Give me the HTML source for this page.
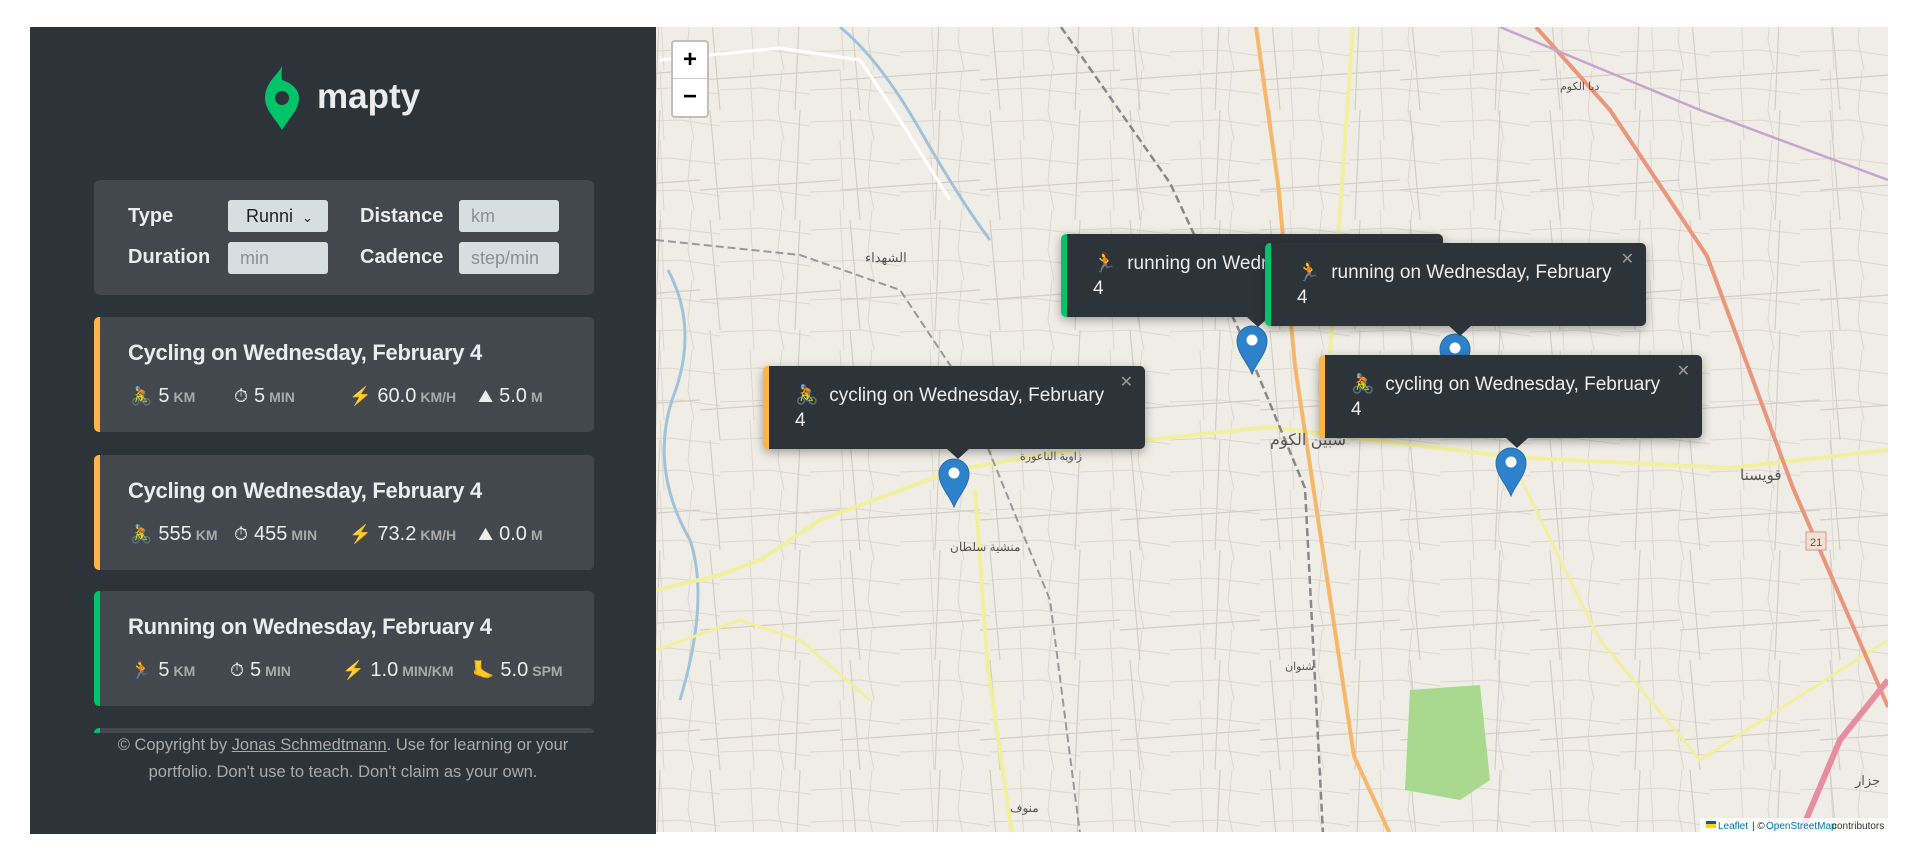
<!DOCTYPE html>
<html><head><meta charset="utf-8"><style>
*{margin:0;padding:0;box-sizing:border-box}
body{width:1912px;height:853px;background:#fff;position:relative;overflow:hidden;font-family:"Liberation Sans",sans-serif}
#side{position:absolute;left:30px;top:27px;width:626px;height:807px;background:#2d3439;color:#ececec}
#map{position:absolute;left:656px;top:27px;width:1232px;height:805px;background:#f0ede7;overflow:hidden}
.abs{position:absolute}
.form{left:64px;top:153px;width:500px;height:115px;background:#42484d;border-radius:6px}
.lbl{position:absolute;font-size:20px;font-weight:bold;color:#ececec}
.inp{position:absolute;width:100px;height:32px;background:#d6dee0;border-radius:3px;font-size:18px;color:#8a9094;padding:6px 0 0 12px}
.card{position:absolute;left:64px;width:500px;height:115px;background:#42484d;border-radius:5px;border-left:6px solid #ffb545}
.card.g{border-left-color:#00c46a}
.card h2{position:absolute;left:28px;top:23px;font-size:22px;font-weight:bold;color:#ececec;letter-spacing:-0.3px}
.d{position:absolute;top:68px;font-size:20px;color:#ececec;white-space:nowrap}
.d i{font-style:normal;font-size:18px;margin-right:6px}
.d b{font-size:14px;color:#aaa;margin-left:4px}
.pop{position:absolute;height:83px;background:#2d3439;border-radius:5px;color:#ececec;font-size:19px;border-left:6px solid #ffb545;box-shadow:0 3px 10px rgba(0,0,0,.35)}
.pop.g{border-left-color:#00c46a}
.pop .t{position:absolute;left:26px;top:17px;line-height:25px}
.pop .x{position:absolute;right:12px;top:6px;color:#999;font-size:16px}
.pop .tip{position:absolute;bottom:-10px;width:0;height:0;border-left:12px solid transparent;border-right:12px solid transparent;border-top:11px solid #2d3439}
.mk{position:absolute;width:32px;height:50px}
</style></head><body>
<div id="side">
 <svg class="abs" style="left:233px;top:39px" width="38" height="64" viewBox="0 0 38 64"><path d="M19 0 C16 8 2 16 2 32 C2 44 12 52 19 64 C26 52 36 44 36 32 C36 22 26 16 19 14 C18 9 19 4 19 0Z" fill="#00c46a"/><circle cx="19" cy="32" r="7" fill="#2d3439"/></svg>
 <div class="abs" style="left:287px;top:50px;font-size:35px;font-weight:bold;color:#ececec">mapty</div>
 <div class="abs form">
  <div class="lbl" style="left:34px;top:25px">Type</div>
  <div class="inp" style="left:134px;top:20px;color:#222;padding-left:18px">Runni <span style="font-size:13px;margin-left:4px">&#8964;</span></div>
  <div class="lbl" style="left:266px;top:25px">Distance</div>
  <div class="inp" style="left:365px;top:20px">km</div>
  <div class="lbl" style="left:34px;top:66px">Duration</div>
  <div class="inp" style="left:134px;top:62px">min</div>
  <div class="lbl" style="left:266px;top:66px">Cadence</div>
  <div class="inp" style="left:365px;top:62px">step/min</div>
 </div>
 <div class="card" style="top:290px"><h2>Cycling on Wednesday, February 4</h2>
  <div class="d" style="left:30px"><i>🚴</i>5<b>KM</b></div><div class="d" style="left:134px"><i>⏱</i>5<b>MIN</b></div><div class="d" style="left:249px"><i style="color:#f57c30">⚡</i>60.0<b>KM/H</b></div><div class="d" style="left:378px"><i>⛰</i>5.0<b>M</b></div></div>
 <div class="card" style="top:428px"><h2>Cycling on Wednesday, February 4</h2>
  <div class="d" style="left:30px"><i>🚴</i>555<b>KM</b></div><div class="d" style="left:134px"><i>⏱</i>455<b>MIN</b></div><div class="d" style="left:249px"><i style="color:#f57c30">⚡</i>73.2<b>KM/H</b></div><div class="d" style="left:378px"><i>⛰</i>0.0<b>M</b></div></div>
 <div class="card g" style="top:564px"><h2>Running on Wednesday, February 4</h2>
  <div class="d" style="left:30px"><i>🏃</i>5<b>KM</b></div><div class="d" style="left:130px"><i>⏱</i>5<b>MIN</b></div><div class="d" style="left:242px"><i style="color:#f57c30">⚡</i>1.0<b>MIN/KM</b></div><div class="d" style="left:372px"><i>🦶</i>5.0<b>SPM</b></div></div>
 <div class="card g" style="top:701px;height:5px;border-radius:5px 5px 0 0"></div>
 <div class="abs" style="left:0;top:705px;width:626px;text-align:center;font-size:16.5px;line-height:27px;color:#aaa">© Copyright by <u>Jonas Schmedtmann</u>. Use for learning or your<br>portfolio. Don't use to teach. Don't claim as your own.</div>
</div>
<div id="map">
<svg width="1232" height="805" viewBox="656 27 1232 805" style="position:absolute;left:0;top:0">
<defs><pattern id="f" width="90" height="70" patternUnits="userSpaceOnUse"><path d="M0 20 L40 18 L90 24 M30 0 L34 70 M62 0 L58 40 L64 70 M0 52 L50 50 L90 56" stroke="#dcd7cf" stroke-width="1" fill="none"/></pattern>
<pattern id="f2" width="140" height="110" patternUnits="userSpaceOnUse"><path d="M10 0 L20 110 M0 80 L140 70 M100 0 L95 110" stroke="#d3cec6" stroke-width="1.2" fill="none"/></pattern></defs>
<rect x="656" y="27" width="1232" height="805" fill="url(#f)"/>
<rect x="656" y="27" width="1232" height="805" fill="url(#f2)"/>
<path d="M1410 690 L1480 685 L1490 780 L1460 800 L1405 790Z" fill="#a9d88f"/>
<path d="M660 60 L780 48 L860 60 L900 120 L950 200" stroke="#fff" stroke-width="3" fill="none"/>
<path d="M840 27 Q880 60 920 130 T990 240" stroke="#9fc4d9" stroke-width="3" fill="none"/>
<path d="M668 270 Q700 330 672 400 Q650 470 690 540 Q710 600 680 700" stroke="#9fc4d9" stroke-width="3" fill="none"/>
<path d="M656 590 L720 575 L760 560 L820 520 L955 470 L1100 445 L1268 427 L1512 457 L1730 468 L1888 450" stroke="#f2ef9f" stroke-width="4" fill="none"/>
<path d="M1353 27 L1342 183 L1330 353" stroke="#f2ef9f" stroke-width="4" fill="none"/>
<path d="M975 490 L988 670 L1012 834" stroke="#f2ef9f" stroke-width="4" fill="none"/>
<path d="M656 650 L740 620 L800 640 L870 700" stroke="#f2ef9f" stroke-width="3" fill="none"/>
<path d="M1512 460 L1560 560 L1600 640 L1700 760 L1888 640" stroke="#f2ef9f" stroke-width="3" fill="none"/>
<path d="M1256 27 L1278 183 L1295 366 L1317 512 L1354 756 L1390 834" stroke="#f5b76a" stroke-width="4" fill="none"/>
<path d="M1536 27 L1610 110 L1707 256 L1793 488 L1888 707" stroke="#e9967a" stroke-width="4" fill="none"/>
<path d="M1500 27 L1700 110 L1888 180" stroke="#c9a3cf" stroke-width="2.5" fill="none"/>
<path d="M1888 680 L1840 740 L1800 834" stroke="#e58ea0" stroke-width="6" fill="none"/>
<path d="M1061 27 L1170 183 L1244 341 L1305 488 L1323 834" stroke="#888" stroke-width="2.5" stroke-dasharray="8 4" fill="none"/>
<path d="M656 240 L800 255 L900 290 L960 380 L1050 600 L1080 834" stroke="#999" stroke-width="2" stroke-dasharray="8 4" fill="none"/>
<text x="865" y="262" font-size="13" fill="#555">الشهداء</text>
<text x="1270" y="445" font-size="16" fill="#555">شبين الكوم</text>
<text x="950" y="551" font-size="12" fill="#555">منشية سلطان</text>
<text x="1740" y="480" font-size="15" fill="#555">قويسنا</text>
<text x="1020" y="460" font-size="11" fill="#555">زاوية الناعورة</text>
<text x="1285" y="670" font-size="11" fill="#555">شنوان</text>
<text x="1010" y="812" font-size="12" fill="#555">منوف</text>
<text x="1560" y="90" font-size="11" fill="#555">دبا الكوم</text>
<text x="1855" y="785" font-size="13" fill="#555">جزار</text>
<rect x="1806" y="532" width="20" height="18" fill="#f3e0d0" stroke="#c99"/><text x="1810" y="546" font-size="11" fill="#555">21</text>
<rect x="1700" y="818" width="188" height="14" fill="rgba(255,255,255,.8)"/>
<text x="1718" y="829" font-size="10" fill="#0078a8">Leaflet</text><text x="1752" y="829" font-size="10" fill="#333">| © </text><text x="1766" y="829" font-size="10" fill="#0078a8">OpenStreetMap</text><text x="1832" y="829" font-size="10" fill="#333">contributors</text>
<rect x="1706" y="821" width="10" height="7" fill="#ffd500"/><rect x="1706" y="821" width="10" height="3" fill="#0057b7"/>
</svg>
<div class="abs" style="left:15px;top:13px;width:38px;height:78px;background:#fff;border:2px solid rgba(0,0,0,.25);border-radius:4px">
 <div style="height:37px;border-bottom:1px solid #ccc;text-align:center;font:bold 24px 'Liberation Sans';line-height:36px;color:#000">+</div>
 <div style="text-align:center;font:bold 24px 'Liberation Sans';line-height:36px;color:#000">−</div></div>
</div>
<svg class="mk" style="left:1236px;top:325px" viewBox="0 0 32 50"><path d="M16 49 C12 38 1 28 1 16 A15 15 0 0 1 31 16 C31 28 20 38 16 49Z" fill="#2e81cb" stroke="#2a6fa8"/><circle cx="16" cy="15" r="5.5" fill="#fff"/></svg>
<svg class="mk" style="left:1439px;top:333px" viewBox="0 0 32 50"><path d="M16 49 C12 38 1 28 1 16 A15 15 0 0 1 31 16 C31 28 20 38 16 49Z" fill="#2e81cb" stroke="#2a6fa8"/><circle cx="16" cy="15" r="5.5" fill="#fff"/></svg>
<svg class="mk" style="left:938px;top:458px" viewBox="0 0 32 50"><path d="M16 49 C12 38 1 28 1 16 A15 15 0 0 1 31 16 C31 28 20 38 16 49Z" fill="#2e81cb" stroke="#2a6fa8"/><circle cx="16" cy="15" r="5.5" fill="#fff"/></svg>
<svg class="mk" style="left:1495px;top:447px" viewBox="0 0 32 50"><path d="M16 49 C12 38 1 28 1 16 A15 15 0 0 1 31 16 C31 28 20 38 16 49Z" fill="#2e81cb" stroke="#2a6fa8"/><circle cx="16" cy="15" r="5.5" fill="#fff"/></svg>
<div class="pop g" style="left:1061px;top:234px;width:382px"><div class="t">🏃&nbsp; running on Wednesday, February<br>4</div><div class="x">✕</div><div class="tip" style="left:179px"></div></div>
<div class="pop g" style="left:1265px;top:243px;width:381px"><div class="t">🏃&nbsp; running on Wednesday, February<br>4</div><div class="x">✕</div><div class="tip" style="left:177px"></div></div>
<div class="pop" style="left:763px;top:366px;width:382px"><div class="t">🚴&nbsp; cycling on Wednesday, February<br>4</div><div class="x">✕</div><div class="tip" style="left:177px"></div></div>
<div class="pop" style="left:1319px;top:355px;width:383px"><div class="t">🚴&nbsp; cycling on Wednesday, February<br>4</div><div class="x">✕</div><div class="tip" style="left:180px"></div></div>
</body></html>
